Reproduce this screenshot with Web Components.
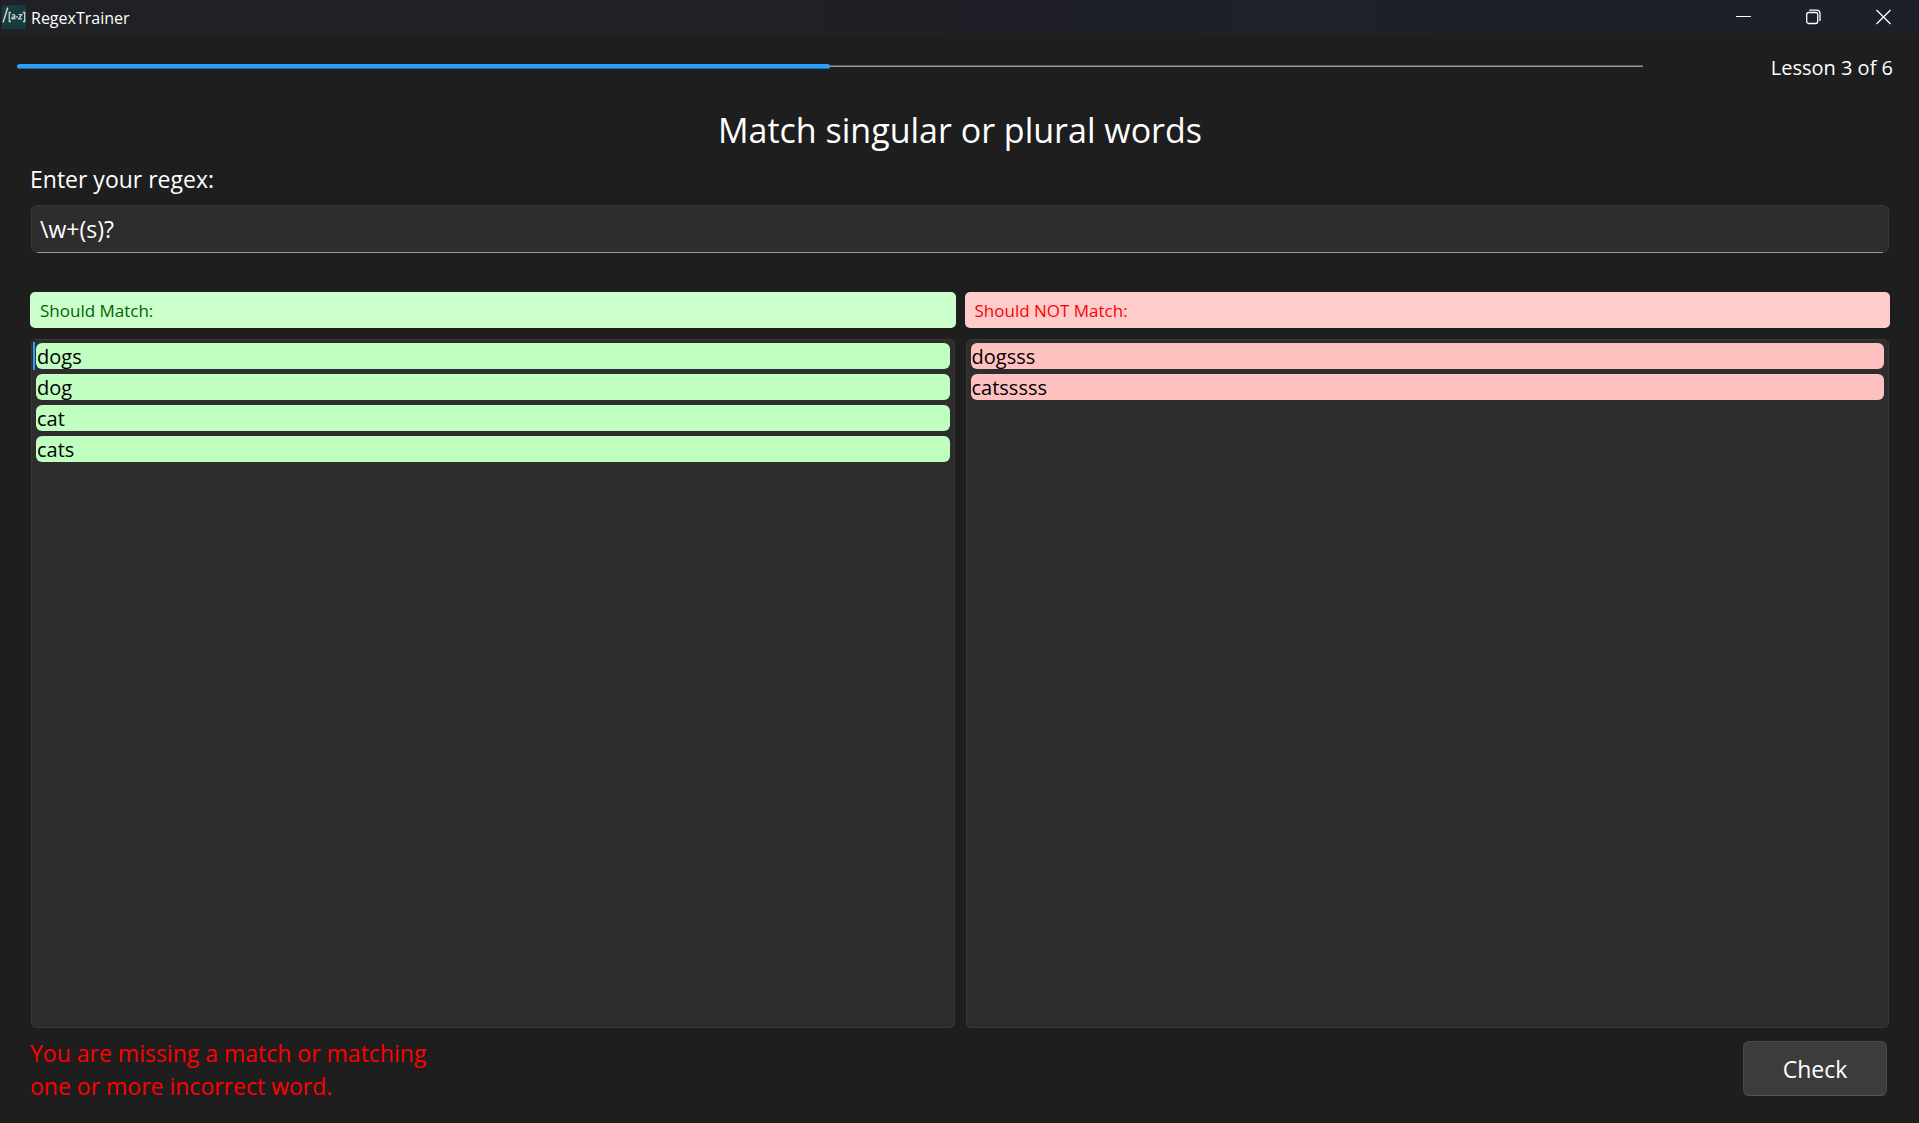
<!DOCTYPE html>
<html lang="en">
<head>
<meta charset="utf-8">
<title>RegexTrainer</title>
<style>
  html, body { margin: 0; height: 100%; }
  body {
    background: #1e1e1e;
    color: #fff;
    font-family: "Open Sans", "Noto Sans", sans-serif;
  }
</style>
</head>
<body>
<regex-trainer></regex-trainer>

<template id="title-bar">
  <style>
    :host { display: flex; align-items: center; height: 34px; background: linear-gradient(90deg, #202125, #1e2029); padding-left: 2px; box-sizing: border-box; }
    .logo { width: 24px; height: 24px; display: block; }
    .name { flex: 1; padding: 1px 0 0 5px; font-size: 16px; line-height: 24px; }
    button { width: 70px; height: 34px; padding: 0; border: 0; background: none; color: #fff; display: grid; place-items: center; }
    svg { display: block; }
  </style>
  <svg class="logo" viewBox="0 0 24 24" aria-hidden="true">
    <rect width="24" height="24" fill="#163c40"/>
    <g fill="none" stroke="#c9d2cf" stroke-width="1.3">
      <path d="M1 17.500L5.800 2.500" stroke-width="1.500"/>
      <path d="M9 7.500H7.300V16.500H9M20.800 7.500H22.700V16.500H20.800"/>
      <path d="M9.800 10Q12.800 8.700 12.800 11V14.200M12.800 11.800Q9.800 11.600 9.800 13T12.800 13.200M14 11.800H16M16.700 9.600H19.700L16.700 13.900H20"/>
    </g>
  </svg>
  <span class="name"><slot></slot></span>
  <button aria-label="Minimize"><svg width="16" height="16" viewBox="0 0 16 16"><path d="M0 7.500H15" stroke="#fff"/></svg></button>
  <button aria-label="Restore"><svg width="16" height="16" viewBox="0 0 16 16" fill="none" stroke="#fff" stroke-width="1.300"><rect x="0.700" y="3.500" width="11" height="11" rx="2"/><path d="M3.200 1.200H10.400Q14 1.200 14 4.800V12"/></svg></button>
  <button aria-label="Close"><svg width="16" height="16" viewBox="0 0 16 16"><path d="M0.500 1L14.500 15M14.500 1L0.500 15" stroke="#fff" stroke-width="1.300"/></svg></button>
</template>

<template id="lesson-progress">
  <style>
    :host { display: flex; align-items: center; padding: 0 26px 0 17px; height: 64px; }
    .track { flex: 1; height: 5px; display: flex; align-items: center; background: linear-gradient(#5a5a5a 50%, #9a9a9a 50%) 0 1px / 100% 2px no-repeat; }
    .fill { height: 5px; border-radius: 3px; background: linear-gradient(#2f9ffc 80%, #22699f 80%); }
    .count { width: 250px; padding-top: 3px; text-align: right; font-size: 20px; line-height: 28px; }
  </style>
  <div class="track" role="progressbar" aria-label="Lesson progress" aria-valuemin="0" aria-valuemax="100"><div class="fill"></div></div>
  <span class="count"><slot></slot></span>
</template>

<template id="regex-field">
  <style>
    :host { display: block; }
    label { display: block; font-size: 23px; line-height: 32px; }
    .box { margin: 10px 1px 0; height: 48px; box-sizing: border-box; border: 1px solid #383838; border-radius: 6px; background: linear-gradient(#9a9a9a, #9a9a9a) center bottom / calc(100% - 12px) 1px no-repeat border-box, #2d2d2d; border-bottom-color: transparent; }
    input { width: 100%; height: 100%; box-sizing: border-box; border: 0; outline: 0; background: none; color: #fff; padding: 0 8px; font: 23px "Open Sans", "Noto Sans", sans-serif; }
  </style>
  <label for="regex"><slot></slot></label>
  <div class="box"><input id="regex" type="text" spellcheck="false"></div>
</template>

<template id="word-list">
  <style>
    :host { display: flex; flex-direction: column; gap: 11px; flex: 1; min-width: 0; --head: #ccffcc; --ink: #006400; --item: #c0ffc0; }
    :host([kind="reject"]) { --head: #ffcccc; --ink: #ff0000; --item: #ffc0c0; }
    h2 { margin: 0; padding: 0 10px; height: 36px; border-radius: 5px; background: var(--head); color: var(--ink); font-size: 17px; line-height: 37px; font-weight: 400; }
    ul { flex: 1; margin: 0 1px; padding: 3px 4px; list-style: none; border: 1px solid #383838; border-radius: 5px; background: #2d2d2d; display: flex; flex-direction: column; gap: 5px; }
    li { height: 26px; line-height: 28px; padding-left: 1px; border-radius: 6px; background: var(--item); color: #000; font-size: 20px; position: relative; }
    li.current::before { content: ""; position: absolute; left: -3px; top: -1px; width: 2px; height: 28px; background: #2f9ffc; }
  </style>
  <h2></h2>
  <ul></ul>
</template>

<template id="regex-trainer">
  <style>
    :host { display: flex; flex-direction: column; min-height: 100vh; }
    main { flex: 1; display: flex; flex-direction: column; padding: 0 29px 20px 30px; }
    h1 { margin: 8px 0 9px; text-align: center; font-size: 34px; line-height: 48px; font-weight: 400; }
    .lists { flex: 1; display: flex; gap: 9px; margin-top: 39px; }
    footer { display: flex; justify-content: space-between; align-items: flex-start; padding-top: 9px; }
    p { margin: 0; width: 420px; color: #f00; font-size: 23px; line-height: 33px; }
    button { margin: 4px 3px 0 0; width: 144px; height: 55px; border: 1px solid #484848; border-bottom-color: #555; border-radius: 6px; background: #3c3c3c; color: #fff; font: 23px "Open Sans", "Noto Sans", sans-serif; }
  </style>
  <title-bar>RegexTrainer</title-bar>
  <lesson-progress value="50">Lesson 3 of 6</lesson-progress>
  <main>
    <h1>Match singular or plural words</h1>
    <regex-field value="\w+(s)?">Enter your regex:</regex-field>
    <div class="lists">
      <word-list heading="Should Match:" words="dogs dog cat cats" current="0"></word-list>
      <word-list kind="reject" heading="Should NOT Match:" words="dogsss catsssss"></word-list>
    </div>
    <footer>
      <p role="status">You are missing a match or matching<br>one or more incorrect word.</p>
      <button type="button">Check</button>
    </footer>
  </main>
</template>

<script>
  class Part extends HTMLElement {
    constructor() {
      super();
      const template = document.getElementById(this.localName);
      this.attachShadow({ mode: "open" }).append(template.content.cloneNode(true));
    }
  }
  customElements.define("title-bar", class extends Part {});
  customElements.define("lesson-progress", class extends Part {
    connectedCallback() {
      const value = this.getAttribute("value");
      this.shadowRoot.querySelector(".track").setAttribute("aria-valuenow", value);
      this.shadowRoot.querySelector(".fill").style.width = value + "%";
    }
  });
  customElements.define("regex-field", class extends Part {
    connectedCallback() {
      this.shadowRoot.querySelector("input").value = this.getAttribute("value");
    }
  });
  customElements.define("word-list", class extends Part {
    connectedCallback() {
      this.shadowRoot.querySelector("h2").textContent = this.getAttribute("heading");
      const items = this.getAttribute("words").split(" ").map((word, i) => {
        const item = document.createElement("li");
        item.textContent = word;
        if (String(i) === this.getAttribute("current")) item.className = "current";
        return item;
      });
      this.shadowRoot.querySelector("ul").replaceChildren(...items);
    }
  });
  customElements.define("regex-trainer", class extends Part {});
</script>
</body>
</html>
